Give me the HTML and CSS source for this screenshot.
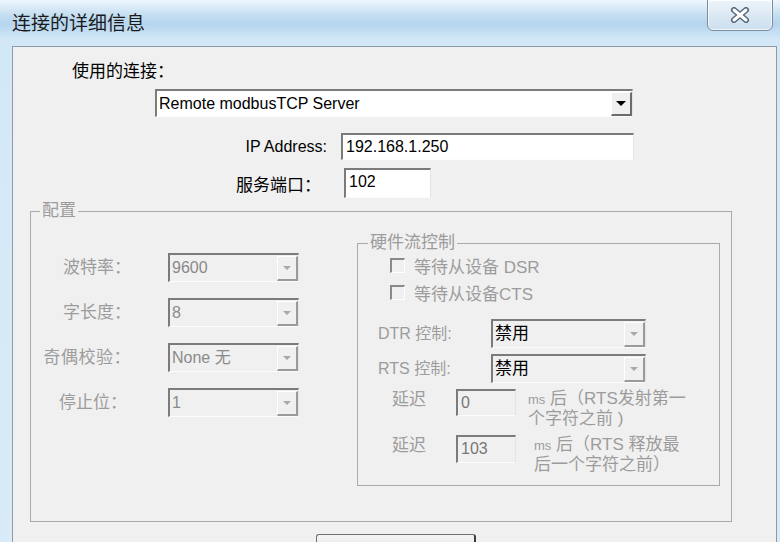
FILE: index.html
```html
<!DOCTYPE html>
<html lang="zh-CN">
<head>
  <meta charset="UTF-8" />
  <meta name="viewport" content="width=device-width, initial-scale=1.0"/>
  <title>连接的详细信息</title>
  <link rel="stylesheet" href="styles.css">
</head>
<body>
<div class="window">
  <div class="titlebar">
    <span class="title">连接的详细信息</span>
    <button class="close-btn" title="关闭">
      <svg width="20" height="16" viewBox="0 0 20 16">
        <path d="M4 3 L16 13 M16 3 L4 13" stroke="#56687b" stroke-width="6" stroke-linecap="round"/>
        <path d="M4 3 L16 13 M16 3 L4 13" stroke="#fff" stroke-width="3" stroke-linecap="round"/>
      </svg>
    </button>
  </div>

  <div class="client">
    <div class="conn-label">使用的连接：</div>
    <div class="combo conn-combo">
      <span class="combo-text">Remote modbusTCP Server</span>
      <span class="combo-btn"><i class="arrow"></i></span>
    </div>

    <div class="field-row ip-row">
      <label class="ip-label">IP Address:</label>
      <div class="edit ip-edit">192.168.1.250</div>
    </div>
    <div class="field-row port-row">
      <label class="port-label">服务端口：</label>
      <div class="edit port-edit">102</div>
    </div>

    <fieldset class="group config">
      <legend>配置</legend>
      <div class="config-body">
        <div class="serial">
          <div class="serial-row">
            <label>波特率：</label>
            <div class="combo off"><span class="combo-text">9600</span><span class="combo-btn"><i class="arrow"></i></span></div>
          </div>
          <div class="serial-row">
            <label>字长度：</label>
            <div class="combo off"><span class="combo-text">8</span><span class="combo-btn"><i class="arrow"></i></span></div>
          </div>
          <div class="serial-row">
            <label class="wide">奇偶校验：</label>
            <div class="combo off"><span class="combo-text">None 无</span><span class="combo-btn"><i class="arrow"></i></span></div>
          </div>
          <div class="serial-row">
            <label class="stop">停止位：</label>
            <div class="combo off"><span class="combo-text">1</span><span class="combo-btn"><i class="arrow"></i></span></div>
          </div>
        </div>

        <fieldset class="group flow">
          <legend>硬件流控制</legend>
          <div class="check-row first"><span class="check"></span>等待从设备 DSR</div>
          <div class="check-row"><span class="check"></span>等待从设备CTS</div>

          <div class="ctl-row dtr">
            <label>DTR 控制:</label>
            <div class="combo off ctl"><span class="combo-text">禁用</span><span class="combo-btn"><i class="arrow"></i></span></div>
          </div>
          <div class="ctl-row">
            <label>RTS 控制:</label>
            <div class="combo off ctl"><span class="combo-text">禁用</span><span class="combo-btn"><i class="arrow"></i></span></div>
          </div>

          <div class="delay-row">
            <label>延迟</label>
            <div class="edit off delay-edit">0</div>
            <div class="delay-note"><small>ms</small> 后（RTS发射第一<br>个字符之前 )</div>
          </div>
          <div class="delay-row second">
            <label>延迟</label>
            <div class="edit off delay-edit tall">103</div>
            <div class="delay-note"><small>ms</small> 后（RTS 释放最<br>后一个字符之前）</div>
          </div>
        </fieldset>
      </div>
    </fieldset>

    <div class="footer">
      <button class="push-btn">高级设置</button>
    </div>
  </div>
</div>
</body>
</html>
```

FILE: styles.css
```css
body {
  margin: 0;
  width: 780px;
  height: 542px;
  overflow: hidden;
  font-family: "Liberation Sans", "Noto Sans CJK SC", sans-serif;
  font-size: 16px;
  color: #000;
}
.window {
  height: 542px;
  display: flex;
  flex-direction: column;
  background: linear-gradient(180deg, #eef6fc 0, #c2ddf1 16px, #b5d5ee 24px, #d3e8f7 40px, #d9ebf8 100%);
}

/* title bar */
.titlebar {
  height: 46px;
  display: flex;
  justify-content: space-between;
  align-items: flex-start;
  flex-shrink: 0;
}
.title {
  margin: 12px 0 0 12px;
  font-size: 19px;
  line-height: 24px;
  color: #1a1a1a;
}
.close-btn {
  margin: -1px 7px 0 0;
  width: 66px;
  height: 32px;
  padding: 0;
  border: 1px solid #7d8c9c;
  border-radius: 0 0 6px 6px;
  background: linear-gradient(180deg, #eef5fb 0, #dbe8f3 50%, #cddff0 100%);
  display: flex;
  align-items: center;
  justify-content: center;
  box-shadow: inset 0 0 0 1px rgba(255,255,255,0.7);
}

/* client area */
.client {
  flex: 1;
  margin: 0 3px 0 12px;
  background: #f0f0f0;
  border: 1px solid #8d9aa7;
  border-bottom: none;
  overflow: hidden;
}
.conn-label {
  margin: 15px 0 0 59px;
  font-size: 17px;
  line-height: 20px;
}

/* combo boxes */
.combo {
  display: flex;
  box-sizing: border-box;
  height: 29px;
  border-style: solid;
  border-width: 2px 1px 1px 2px;
  border-color: #7b7b7b #e4e4e4 #fcfcfc #7b7b7b;
  background: #fff;
}
.combo-text {
  flex: 1;
  padding-left: 2px;
  line-height: 25px;
  white-space: nowrap;
  overflow: hidden;
}
.combo-btn {
  width: 21px;
  margin: 1px 0 0 0;
  box-sizing: border-box;
  background: #f0f0f0;
  border-style: solid;
  border-width: 1px 2px 2px 1px;
  border-color: #fff #6b6b6b #6b6b6b #fff;
  display: flex;
  align-items: center;
  justify-content: center;
}
.arrow {
  width: 0;
  height: 0;
  border-left: 5px solid transparent;
  border-right: 5px solid transparent;
  border-top: 5px solid #000;
}
.combo.off {
  background: #f0f0f0;
  color: #8a8a8a;
}
.combo.off .combo-btn {
  border-color: #fff #9a9a9a #9a9a9a #fff;
}
.combo.off .arrow {
  border-top-color: #a8a8a8;
  border-left-width: 4px;
  border-right-width: 4px;
  border-top-width: 4px;
}
.conn-combo {
  margin: 7px 0 0 142px;
  width: 478px;
  height: 28px;
}

/* edit fields */
.edit {
  box-sizing: border-box;
  height: 27px;
  padding-left: 3px;
  line-height: 24px;
  background: #fff;
  border-style: solid;
  border-width: 2px 1px 1px 2px;
  border-color: #7b7b7b #e4e4e4 #fcfcfc #7b7b7b;
}
.edit.off {
  background: #f0f0f0;
  color: #777;
}
.field-row {
  display: flex;
  align-items: center;
}
.ip-row {
  margin-top: 16px;
  height: 27px;
}
.ip-label {
  width: 314px;
  text-align: right;
}
.ip-edit {
  margin-left: 14px;
  width: 293px;
}
.port-row {
  margin-top: 8px;
  height: 30px;
}
.port-label {
  width: 308px;
  text-align: right;
  font-size: 17px;
}
.port-edit {
  margin-left: 23px;
  width: 87px;
  height: 30px;
}

/* group boxes */
.group {
  box-sizing: border-box;
  margin: 0;
  padding: 0;
  border: 1px solid #a9a9a9;
  min-width: 0;
}
.group legend {
  padding: 0 2px;
  font-size: 17px;
  line-height: 18px;
  color: #9c9c9c;
}
.config {
  margin: 4px 0 0 17px;
  width: 702px;
  height: 320px;
}
.config legend {
  margin-left: 9px;
}
.config-body {
  display: flex;
}

.serial {
  width: 326px;
  padding-top: 33px;
}
.serial-row {
  display: flex;
  height: 29px;
  margin-bottom: 16px;
}
.serial-row label {
  width: 100px;
  text-align: right;
  line-height: 29px;
  font-size: 17px;
  color: #9c9c9c;
}
.serial-row label.wide {
  letter-spacing: 0.5px;
}
.serial-row label.stop {
  width: 96px;
  margin-right: 4px;
}
.serial-row .combo {
  margin-left: 37px;
  width: 131px;
}

.flow {
  margin-top: 14px;
  width: 363px;
  height: 252px;
  color: #9c9c9c;
}
.flow legend {
  margin-left: 10px;
}
.check-row {
  display: flex;
  align-items: center;
  margin: 3px 0 0 32px;
  height: 20px;
  font-size: 17px;
}
.check-row + .check-row {
  margin-top: 7px;
}
.check {
  box-sizing: border-box;
  width: 15px;
  height: 15px;
  margin-right: 9px;
  background: #f0f0f0;
  border-style: solid;
  border-width: 2px 1px 1px 2px;
  border-color: #8a8a8a #fff #fff #8a8a8a;
}
.ctl-row {
  display: flex;
  margin: 6px 0 0 20px;
  height: 29px;
}
.ctl-row.dtr {
  margin-top: 17px;
}
.ctl-row label {
  width: 113px;
  line-height: 29px;
  font-size: 16px;
}
.ctl-row .combo {
  width: 155px;
}
.combo.off.ctl {
  color: #000;
}
.combo.ctl .combo-text {
  font-size: 17px;
}
.delay-row {
  display: flex;
  align-items: flex-start;
  margin: 6px 0 0 34px;
  font-size: 17px;
}
.delay-row.second {
  margin-top: 7px;
}
.delay-row label {
  width: 64px;
  line-height: 22px;
}
.delay-edit {
  width: 60px;
  font-size: 16px;
}
.delay-edit.tall {
  height: 28px;
}
.delay-note {
  margin-left: 12px;
  line-height: 19px;
}
.delay-row.second .delay-note {
  margin-left: 18px;
}
.delay-note small {
  font-size: 13px;
}

/* bottom button */
.footer {
  display: flex;
  padding: 12px 0 0 303px;
}
.push-btn {
  width: 160px;
  height: 28px;
  padding: 0;
  border: 1px solid #707070;
  border-right: 2px solid #3c3c3c;
  border-radius: 3px;
  background: linear-gradient(180deg, #f4f4f4, #dddddd);
  font-family: inherit;
  font-size: 17px;
  padding-top: 4px;
}
```
